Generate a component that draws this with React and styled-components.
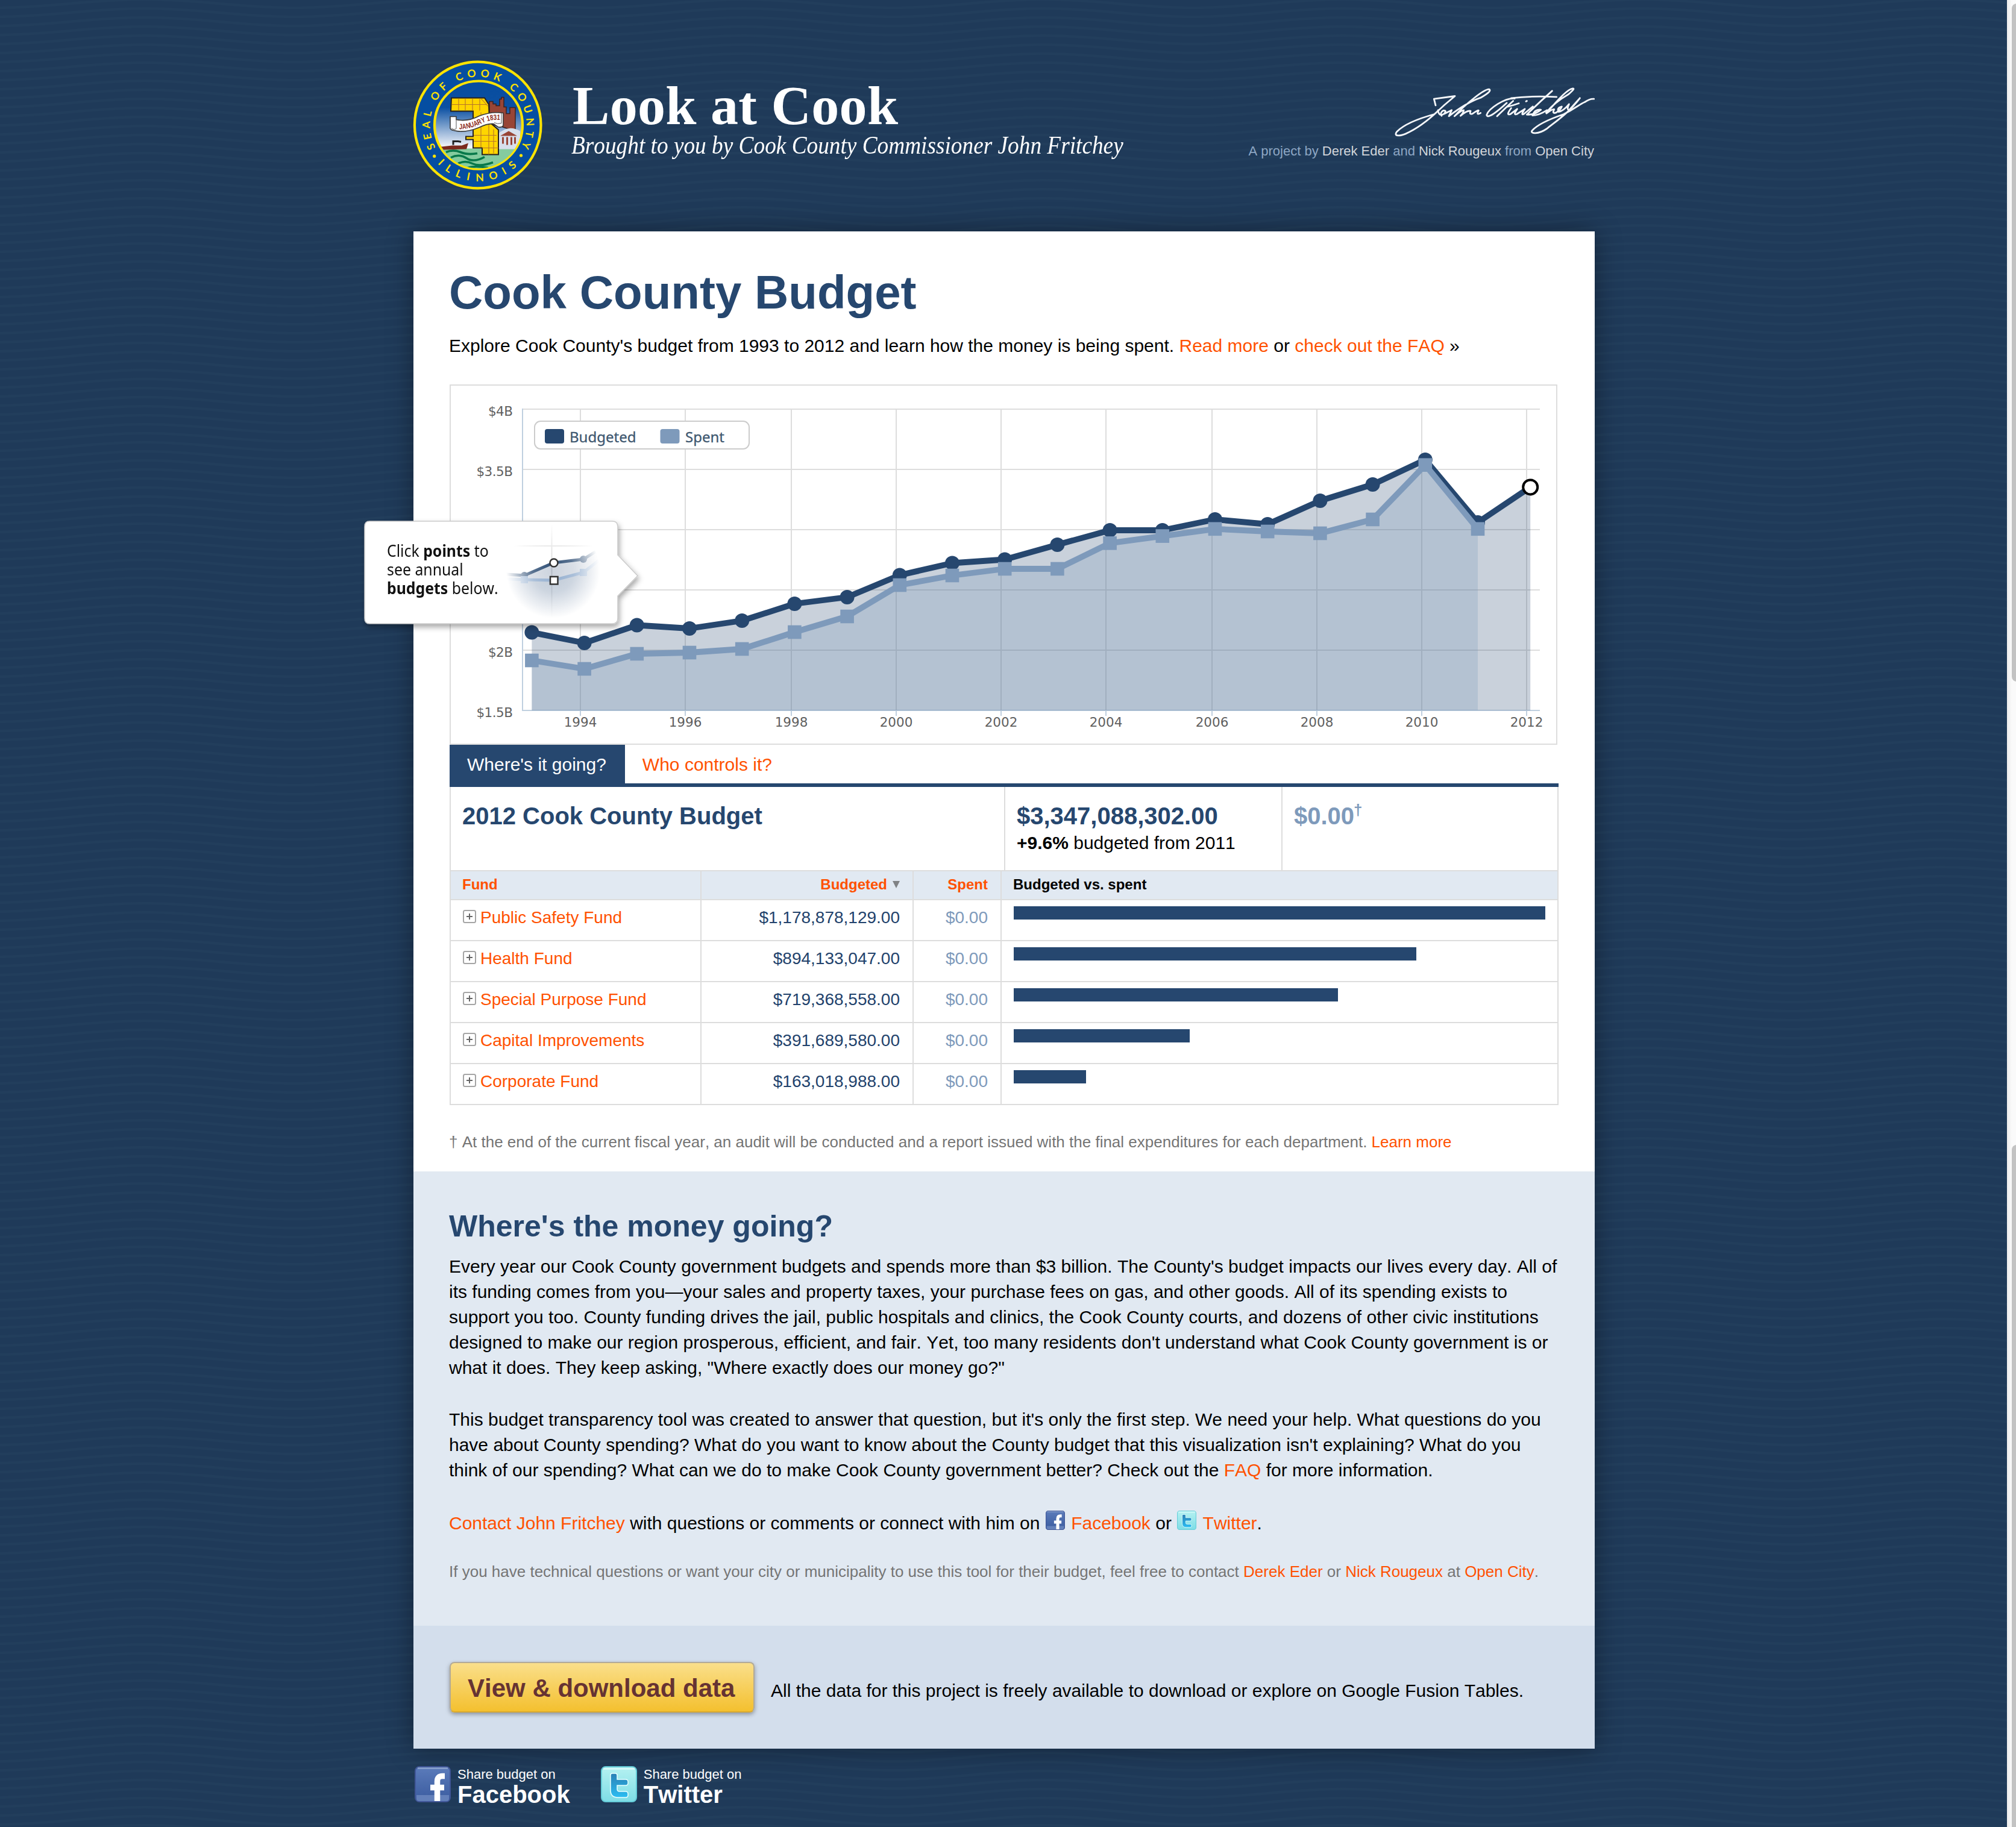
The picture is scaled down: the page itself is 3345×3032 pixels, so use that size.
import React from "react";
import styled, { createGlobalStyle, css } from "styled-components";

const navy = "#26476f";
const steel = "#7e9abb";
const orange = "#ff5100";
const line = "#dddddd";
const sans = '"Liberation Sans", Arial, Helvetica, sans-serif';
const serif = '"Liberation Serif", "Times New Roman", serif';

const wavePath = (y) => `M0 ${y + 7} C90 ${y + 7} 158 ${y - 7} 248 ${y - 7} S406 ${y + 7} 497 ${y + 7}`;
const waves = encodeURIComponent(
  `<svg xmlns='http://www.w3.org/2000/svg' width='497' height='15'><g fill='none' stroke='#26435f' stroke-width='4' stroke-opacity='.42'>${[-15, 0, 15, 30]
    .map((y) => `<path d='${wavePath(y)}'/>`)
    .join("")}</g></svg>`
);

const GlobalStyle = createGlobalStyle`
  html, body { margin: 0; padding: 0; background: #1f3a59; overflow: hidden; }
  * { box-sizing: border-box; }
`;

const Window = styled.div`
  display: flex;
  width: 3345px;
  height: 3032px;
  overflow: hidden;
  font-family: ${sans};
  font-kerning: none;
  color: #000;
`;

const Page = styled.div`
  flex: 0 0 3330px;
  display: flex;
  flex-direction: column;
  align-items: center;
  padding-left: 2px;
  background-color: #1f3a59;
  background-image: url("data:image/svg+xml,${waves}");
  background-position: -8px 6px;
`;

const ScrollTrack = styled.div`
  flex: 1;
  display: flex;
  flex-direction: column;
  justify-content: space-between;
  padding: 6px 0 0 8px;
  overflow: hidden;
  background: linear-gradient(90deg, #ececec, #fafafa 8px);
`;

const ScrollThumb = styled.div`
  width: 16px;
  height: ${(p) => p.$height}px;
  border-radius: 8px;
  background: #c3c3c3;
  ${(p) => p.$cut && css`border-bottom-left-radius: 0;`}
`;

const Header = styled.header`
  width: 1960px;
  height: 384px;
  display: flex;
  align-items: flex-start;
  flex: none;
`;

const SealArt = styled.svg`
  width: 216px;
  height: 216px;
  margin: 100px 1px 0 -1px;
  flex: none;
`;

const Branding = styled.div`
  flex: 1;
  margin: 130px 0 0 48px;
  color: #fff;
  font-family: ${serif};
  white-space: nowrap;
`;

const SiteName = styled.div`
  font-size: 92px;
  line-height: 90px;
  font-weight: bold;
  letter-spacing: 0.3px;
`;

const Tagline = styled.div`
  width: 0;
  margin-left: -2px;
  font-size: 42px;
  line-height: 42px;
  font-style: italic;
  transform: scaleX(0.888);
  transform-origin: 0 0;
`;

const Credits = styled.div`
  display: flex;
  flex-direction: column;
  align-items: flex-end;
  padding-top: 145px;
`;

const SignatureArt = styled.svg`
  width: 332px;
  height: 82px;
`;

const CreditLine = styled.div`
  margin-top: 11px;
  padding-right: 1px;
  font-size: 22px;
  line-height: 26px;
  color: #8ea7c4;
  white-space: nowrap;
  b { font-weight: normal; color: #d2d5da; }
`;

const Card = styled.main`
  width: 1960px;
  flex: none;
  background: #fff;
  box-shadow: 0 0 40px rgba(0, 0, 0, 0.38);
`;

const Section = styled.section`
  height: ${(p) => p.$height}px;
  padding: ${(p) => p.$top}px 60px 0;
  background: ${(p) => p.$bg};
`;

const PageTitle = styled.h1`
  margin: 0 0 0 -1px;
  font-size: 78px;
  line-height: 90px;
  color: ${navy};
`;

const Text = styled.p`
  margin: ${(p) => p.$gap || 0}px 0 0 -1px;
  font-size: 30px;
  line-height: 42px;
  white-space: nowrap;
`;

const SmallText = styled.p`
  margin: ${(p) => p.$gap}px 0 0 -1px;
  font-size: 26px;
  line-height: 36px;
  color: #757575;
  white-space: nowrap;
`;

const Link = styled.a`
  color: ${orange};
`;

const ChartFrame = styled.div`
  position: relative;
  width: 1838px;
  height: 598px;
  margin-top: 43px;
  border: 2px solid ${line};
`;

const ChartArt = styled.svg`
  display: block;
  width: 1834px;
  height: 594px;
`;

const Callout = styled.div`
  position: absolute;
  left: -158px;
  top: 210px;
  width: 490px;
  height: 204px;
`;

const CalloutArt = styled.svg`
  position: absolute;
  inset: 0;
  width: 490px;
  height: 204px;
`;

const CalloutText = styled.div`
  position: relative;
  padding: 48px 0 0 52px;
  font-family: "Noto Sans", "Open Sans", sans-serif;
  font-size: 27px;
  line-height: 31px;
  color: #111;
  white-space: nowrap;
  transform: scaleX(0.92);
  transform-origin: 52px 0;
`;

const Tabs = styled.nav`
  display: flex;
  height: 70px;
  border-bottom: 6px solid ${navy};
`;

const Tab = styled.div`
  padding: 2px 31px 0 29px;
  font-size: 30px;
  line-height: 62px;
  color: ${(p) => (p.$active ? "#fff" : orange)};
  background: ${(p) => (p.$active ? navy : "transparent")};
`;

const Table = styled.div`
  border: solid ${line};
  border-width: 0 2px;
`;

const Summary = styled.div`
  display: grid;
  grid-template-columns: 918px 460px 458px;
  height: 140px;
  border-bottom: 2px solid ${line};
`;

const SummaryCell = styled.div`
  padding: 24px 0 0 19px;
  & + & { border-left: 2px solid ${line}; }
`;

const Figure = styled.div`
  font-size: 40px;
  line-height: 48px;
  font-weight: bold;
  white-space: nowrap;
  color: ${(p) => (p.$muted ? steel : navy)};
`;

const Dagger = styled.span`
  display: inline-block;
  font-size: 26px;
  line-height: 24px;
  transform: translate(-1px, -15px);
`;

const Change = styled.div`
  margin-top: 3px;
  font-size: 30px;
  line-height: 36px;
  white-space: nowrap;
`;

const columns = css`
  display: grid;
  grid-template-columns: 414px 352px 146px 924px;
`;

const HeadRow = styled.div`
  ${columns}
  height: 48px;
  border-bottom: 2px solid ${line};
  background: #e1e9f2;
  font-size: 24px;
  line-height: 28px;
  font-weight: bold;
`;

const HeadCell = styled.div`
  padding: 8px 21px 0 19px;
  color: ${(p) => (p.$plain ? "#000" : orange)};
  text-align: ${(p) => (p.$right ? "right" : "left")};
  & + & { border-left: 2px solid ${line}; }
`;

const SortArrow = styled.span`
  display: inline-block;
  margin-left: 9px;
  border: solid transparent;
  border-width: 12px 6.5px 0;
  border-top-color: #808285;
  vertical-align: 2px;
`;

const FundRow = styled.div`
  ${columns}
  height: 68px;
  border-bottom: 2px solid ${line};
  font-size: 28px;
  line-height: 34px;
`;

const Cell = styled.div`
  padding: 12px 21px 0 20px;
  white-space: nowrap;
  & + & { border-left: 2px solid ${line}; }
`;

const NameCell = styled(Cell)`
  display: flex;
  gap: 7px;
  color: ${orange};
`;

const MoneyCell = styled(Cell)`
  text-align: right;
  color: ${(p) => (p.$muted ? steel : "#22426c")};
`;

const BarCell = styled(Cell)`
  padding-top: 10px;
`;

const Bar = styled.div`
  height: 22px;
  background: ${navy};
`;

const ExpandIcon = styled.svg`
  width: 22px;
  height: 22px;
  margin-top: 4px;
`;

const SectionTitle = styled.h2`
  margin: 0 0 0 -1px;
  font-size: 50px;
  line-height: 60px;
  color: ${navy};
`;

const DownloadRow = styled.div`
  display: flex;
  align-items: flex-start;
`;

const DownloadButton = styled.div`
  width: 506px;
  height: 84px;
  padding-left: 28px;
  border: 2px solid #b3aa96;
  border-bottom-color: #d9a92e;
  border-radius: 8px;
  background: linear-gradient(#fadf8b, #f4c02f);
  box-shadow: 0 3px 7px rgba(0, 0, 0, 0.35);
  color: #663333;
  font-size: 42px;
  line-height: 83px;
  font-weight: bold;
  white-space: nowrap;
`;

const DownloadNote = styled.div`
  margin: 27px 0 0 27px;
  font-size: 30px;
  line-height: 42px;
  white-space: nowrap;
`;

const ShareBar = styled.footer`
  display: flex;
  gap: 51px;
  width: 1960px;
  padding: 29px 0 0 2px;
`;

const Share = styled.div`
  display: flex;
  gap: 11px;
  color: #fff;
`;

const ShareLabel = styled.div`
  padding-top: 2px;
  font-size: 22px;
  line-height: 24px;
  white-space: nowrap;
`;

const ShareName = styled.div`
  padding-top: 1px;
  font-size: 40px;
  line-height: 40px;
  font-weight: bold;
`;

const Badge = styled.svg`
  width: ${(p) => p.$size}px;
  height: ${(p) => p.$size}px;
  ${(p) => p.$inline && css`margin: -8px 2px 0 1px; vertical-align: -1px;`}
`;

function Facebook({ size, inline }) {
  return (
    <Badge $size={size} $inline={inline} viewBox="0 0 60 60">
      <defs>
        <linearGradient id="fb" x2="0" y2="1">
          <stop offset="0" stopColor="#5b7bba" />
          <stop offset="1" stopColor="#3a5b9f" />
        </linearGradient>
      </defs>
      <rect x="1" y="1" width="58" height="58" rx="7" fill="url(#fb)" stroke="#3f5596" strokeWidth="2" />
      <path d="M5 3.5H55" stroke="#8ba3cf" strokeWidth="2.5" />
      <path d="M3 48h54v6q0 4-4 4H7q-4 0-4-4z" fill="#6380ba" />
      <path d="M50 16.5h-4q-8.500 0-8.500 9V58M26 35.500H49" fill="none" stroke="#fff" strokeWidth="9.500" />
    </Badge>
  );
}

function Twitter({ size, inline }) {
  return (
    <Badge $size={size} $inline={inline} viewBox="0 0 60 60">
      <defs>
        <linearGradient id="tw" x2="0" y2="1">
          <stop offset="0" stopColor="#b5f1f1" />
          <stop offset="1" stopColor="#7edde6" />
        </linearGradient>
        <linearGradient id="twt" x2="0" y2="1">
          <stop offset="0" stopColor="#2a80b5" />
          <stop offset="1" stopColor="#2bbdf2" />
        </linearGradient>
      </defs>
      <rect x="1" y="1" width="58" height="58" rx="7" fill="url(#tw)" stroke="#66cdd9" strokeWidth="2" />
      <path d="M4 4.500H56" stroke="#d9fbfa" strokeWidth="2.500" />
      <path
        d="M16 15q0-3 3-3h5q3 0 3 3v7h14q4 0 4 4v2q0 4-4 4H27v6q0 4 4 4h10q4 0 4 4v2q0 4-4 4H28q-12 0-12-12z"
        fill="url(#twt)"
        stroke="#e6ffff"
        strokeWidth="1.500"
      />
    </Badge>
  );
}

function Seal() {
  return (
    <SealArt viewBox="15 9.5 216 216">
      <defs>
        <linearGradient id="sky" x2="0" y2="1">
          <stop offset="0" stopColor="#074c9f" />
          <stop offset=".3" stopColor="#0b50a2" />
          <stop offset=".75" stopColor="#f3f6fb" />
        </linearGradient>
        <clipPath id="inner"><circle cx="124" cy="117" r="72" /></clipPath>
        <path id="arcTop" d="M52.900 154.600A80 80 0 1 1 194.100 154.600" />
        <path id="arcBottom" d="M56 181A93 93 0 0 0 190.500 182" />
      </defs>
      <circle cx="122.700" cy="117" r="104.800" fill="#054ea2" stroke="#ffe300" strokeWidth="4.200" />
      <circle cx="124" cy="117" r="73" fill="url(#sky)" stroke="#ffe300" strokeWidth="4.200" />
      <g clipPath="url(#inner)">
        <path d="M50 156H200V195H50z" fill="#85cb9f" />
        <path
          d="M70 162q12-5 24 0t28 2M78 171q14-7 26 1t30-2M90 181q12-6 24 0t34-2M106 188q12-4 34 0"
          stroke="#08784a" strokeWidth="3.600" fill="none"
        />
        <path d="M62 153l18-2 16 0 11-4-3 10-38 1z" fill="#7b2a1e" />
        <path d="M82 150v-6h8l5 1" stroke="#222" strokeWidth="3" fill="none" />
        <path d="M142 104V78h6v4h5v3h6V74h3v-3h4v16h4v11h6V88h9v40q-22-10-43-12z" fill="#984536" stroke="#3b2220" strokeWidth="1.500" />
        <path d="M155 133q18-18 38-6v30h-36z" fill="#d7dfec" />
        <path d="M160 135l14-8 14 8zM163 137h3v11h-3zM170 137h3v13h-3zM177 137h3v13h-3zM183 137h3v11h-3z" fill="#984536" />
      </g>
      <path
        d="M79 72h55l7 11 1 29 15 13v41h-27v-11h-15v-14h-12v-5h12V94H78z"
        fill="#ffd500" stroke="#27221f" strokeWidth="2"
      />
      <path
        d="M80 83h58M91 73v20M102 73v20M114 73v20M126 73v20M128 73l12 13M116 105h26M128 96v58M141 112v54M116 134h38M116 144h38M130 155h27M149 124v40"
        stroke="#b5742a" strokeWidth="1.100" fill="none"
      />
      <path
        d="M77 103h10v5q19 4 38-6 20-8 40-5v21q-3 4-9 2l-7-5q-10-1-24 6-24 10-42 5-7-1-6-6z"
        fill="#fff" stroke="#3a3a3a" strokeWidth="1.600"
      />
      <path d="M87 106v17q-4 3-8-1M162 97v17q-7 2-12-1" stroke="#555" strokeWidth="1" fill="none" />
      <path id="ribbon" d="M92 124Q110 124 128 115T162 109" fill="none" />
      <text fontFamily="Liberation Sans, sans-serif" fontWeight="bold" fontSize="12.500" fill="#8d2c20">
        <textPath href="#ribbon" textLength="70" lengthAdjust="spacingAndGlyphs">JANUARY 1831</textPath>
      </text>
      <g fontFamily="Lato, Open Sans, sans-serif" fontWeight="bold" fontSize="17.500" fill="#ffe300">
        <text><textPath href="#arcTop" textLength="328">SEAL OF COOK COUNTY</textPath></text>
        <text><textPath href="#arcBottom" textLength="146">ILLINOIS</textPath></text>
      </g>
      <circle cx="50.700" cy="168.700" r="2.600" fill="#ffe300" />
      <circle cx="194.500" cy="167.500" r="2.600" fill="#ffe300" />
    </SealArt>
  );
}

function Signature() {
  return (
    <SignatureArt viewBox="42 45 996 245" fill="none" stroke="#f4f6f9" strokeWidth="8.500" strokeLinecap="round" strokeLinejoin="round">
      <path d="M246 134L238 102L342 88Q290 130 240 178C160 200 90 228 54 264C36 286 60 290 96 276C160 248 210 208 262 158" />
      <path d="M258 158Q262 192 288 176Q304 158 284 160Q266 170 276 186M290 176L326 158L312 188Q400 120 470 96Q530 62 512 54C490 52 400 122 340 188Q370 160 386 158Q384 172 370 186Q402 158 420 162Q412 184 432 174Q458 156 460 160Q446 186 470 172" />
      <path d="M640 100C590 96 510 150 500 182C504 204 560 160 600 122M632 112Q590 150 552 188M600 142Q632 134 660 124M622 98Q720 86 848 92" />
      <path d="M622 148Q594 186 618 178L652 152Q630 184 650 178L690 152Q668 184 684 178L730 140M826 62Q760 120 700 180Q740 182 770 156Q740 152 728 184Q760 184 800 158M696 114L700 112" />
      <path d="M796 170Q840 118 906 80Q944 48 928 50C900 54 850 110 798 174Q830 150 836 154Q824 178 846 170Q870 154 874 140Q848 146 858 166Q880 164 910 128Q896 158 912 156L964 98M964 98C910 170 850 210 800 250C756 280 716 276 726 260C752 230 820 200 884 178C940 150 960 130 988 118Q1014 100 1034 102" />
    </SignatureArt>
  );
}

const budgeted = [1049.6, 1067, 1037.5, 1043, 1030, 1002, 991, 954.5, 934.5, 928.5, 904, 880, 880, 862, 870, 831, 804, 763, 867, 808.4];
const spent = [1096, 1110, 1085, 1083, 1077, 1049, 1023, 971, 955, 944, 944, 901.4, 889.6, 877.8, 882, 885, 862, 771.7, 877.8];
const px = (i) => 882.4 + i * 87.2;
const toLine = (ys) => ys.map((y, i) => `${i ? "L" : "M"}${px(i)} ${y}`).join("");
const toArea = (ys) => `${toLine(ys)}V1179H${px(0)}Z`;
const gridX = [963, 1137, 1313, 1487, 1661, 1835, 2011, 2185, 2359, 2533];
const gridY = [679, 779, 879, 979, 1079];
const yLabels = [["$4B", 690], ["$3.5B", 790], ["$3B", 890], ["$2.5B", 990], ["$2B", 1090], ["$1.5B", 1190]];

function Chart() {
  return (
    <ChartArt viewBox="748 640 1834 594">
      <g stroke={line} strokeWidth="2">
        {gridX.map((x) => <path key={x} d={`M${x} 679V1179`} />)}
        {gridY.map((y) => <path key={y} d={`M867 ${y}H2555`} />)}
      </g>
      <g stroke="#c0d0e0" strokeWidth="2" fill="none">
        <path d="M867 678V1179H2555" />
        {gridX.map((x) => <path key={x} d={`M${x} 1179V1188`} />)}
      </g>
      <path d={toArea(budgeted)} fill="rgba(38,71,111,.25)" />
      <path d={toLine(budgeted)} fill="none" stroke={navy} strokeWidth="9.800" strokeLinejoin="round" />
      {budgeted.slice(0, 19).map((y, i) => <circle key={i} cx={px(i)} cy={y} r="12" fill={navy} />)}
      <path d={toArea(spent)} fill="rgba(126,154,187,.27)" />
      <path d={toLine(spent)} fill="none" stroke={steel} strokeWidth="9.800" strokeLinejoin="round" />
      {spent.map((y, i) => <rect key={i} x={px(i) - 11.3} y={y - 11.3} width="22.600" height="22.600" fill={steel} />)}
      <circle cx={px(19)} cy={budgeted[19]} r="12" fill="#fff" stroke="#000" strokeWidth="4" />
      <rect x="887" y="699" width="356" height="46" rx="10" fill="#fff" stroke="#ccc" strokeWidth="2" />
      <rect x="904" y="712" width="32" height="24" rx="4" fill={navy} />
      <rect x="1095.500" y="712" width="32" height="24" rx="4" fill={steel} />
      <g fontFamily="Noto Sans, sans-serif" fontSize="24" fill="#3e576f" stroke="#3e576f" strokeWidth=".3">
        <text x="945" y="734">Budgeted</text>
        <text x="1137" y="734">Spent</text>
      </g>
      <g fontFamily="DejaVu Sans, sans-serif" fontSize="21.500" fill="#606060">
        {yLabels.map(([t, y]) => <text key={t} x="850.500" y={y} textAnchor="end" letterSpacing="-.5">{t}</text>)}
        {gridX.map((x, i) => <text key={x} x={x} y="1206" textAnchor="middle">{1994 + i * 2}</text>)}
      </g>
    </ChartArt>
  );
}

function PointsHint() {
  return (
    <Callout>
      <CalloutArt viewBox="590 850 490 204">
        <defs>
          <filter id="drop" x="-10%" y="-10%" width="120%" height="130%">
            <feDropShadow dx="2" dy="5" stdDeviation="5" floodColor="#000" floodOpacity=".35" />
          </filter>
          <radialGradient id="fade" gradientUnits="userSpaceOnUse" cx="918" cy="948" r="78">
            <stop offset="0" stopColor="#fff" />
            <stop offset=".45" stopColor="#fff" stopOpacity=".75" />
            <stop offset="1" stopColor="#fff" stopOpacity="0" />
          </radialGradient>
          <mask id="spot"><rect x="820" y="865" width="190" height="170" fill="url(#fade)" /></mask>
        </defs>
        <path
          d="M613 865H1016Q1025 865 1025 874V921L1058 955.500L1025 989V1026Q1025 1035 1016 1035H613Q605 1035 605 1026V874Q605 865 613 865Z"
          fill="#fff" stroke="#cbcbcb" strokeWidth="1.600" filter="url(#drop)"
        />
        <g mask="url(#spot)">
          <path d="M915.500 870V1030M840 906H1000" stroke="#ddd" strokeWidth="2" />
          <path d="M840 953L870 955L918.600 934L968 928L1000 908V1030H840Z" fill="#26476f" fillOpacity=".23" />
          <path d="M840 962H870L918.600 963L968 950L1000 925V1030H840Z" fill="#7e9abb" fillOpacity=".2" />
          <path d="M840 953L870 955L918.600 934L968 928L1000 908" stroke={navy} strokeWidth="5" fill="none" />
          <path d="M840 961L870 962L918.600 963L968 950L1000 925" stroke="#8fabcd" strokeWidth="5" fill="none" />
          <circle cx="870" cy="955" r="6" fill={navy} /><circle cx="968" cy="928" r="6" fill={navy} />
          <path d="M864 956h12v12h-12zM962 944h12v12h-12z" fill="#8fabcd" />
        </g>
        <circle cx="919" cy="934" r="6.500" fill="#fff" stroke="#333" strokeWidth="2.500" />
        <rect x="913" y="957" width="12.500" height="12.500" fill="#fff" stroke="#333" strokeWidth="2.500" />
      </CalloutArt>
      <CalloutText>
        Click <b>points</b> to<br />see annual<br /><b>budgets</b> below.
      </CalloutText>
    </Callout>
  );
}

const funds = [
  ["Public Safety Fund", "$1,178,878,129.00", 882],
  ["Health Fund", "$894,133,047.00", 668],
  ["Special Purpose Fund", "$719,368,558.00", 538],
  ["Capital Improvements", "$391,689,580.00", 292],
  ["Corporate Fund", "$163,018,988.00", 120],
];

function Expand() {
  return (
    <ExpandIcon viewBox="0 0 22 22">
      <rect x="1" y="1" width="20" height="20" rx="2.500" fill="#fff" stroke="#a5a5a5" strokeWidth="2" />
      <path d="M11 6v10M6 11h10" stroke="#666" strokeWidth="2" />
    </ExpandIcon>
  );
}

export default function App() {
  return (
    <Window>
      <GlobalStyle />
      <Page>
        <Header>
          <Seal />
          <Branding>
            <SiteName>Look at Cook</SiteName>
            <Tagline>Brought to you by Cook County Commissioner John Fritchey</Tagline>
          </Branding>
          <Credits>
            <Signature />
            <CreditLine>
              A project by <b>Derek Eder</b> and <b>Nick Rougeux</b> from <b>Open City</b>
            </CreditLine>
          </Credits>
        </Header>

        <Card>
          <Section $height={1560} $top={56} $bg="#fff">
            <PageTitle>Cook County Budget</PageTitle>
            <Text $gap={23}>
              Explore Cook County's budget from 1993 to 2012 and learn how the money is being spent.{" "}
              <Link>Read more</Link> or <Link>check out the FAQ</Link> »
            </Text>
            <ChartFrame>
              <Chart />
              <PointsHint />
            </ChartFrame>
            <Tabs>
              <Tab $active>Where's it going?</Tab>
              <Tab>Who controls it?</Tab>
            </Tabs>
            <Table>
              <Summary>
                <SummaryCell><Figure>2012 Cook County Budget</Figure></SummaryCell>
                <SummaryCell>
                  <Figure>$3,347,088,302.00</Figure>
                  <Change><b>+9.6%</b> budgeted from 2011</Change>
                </SummaryCell>
                <SummaryCell><Figure $muted>$0.00<Dagger>†</Dagger></Figure></SummaryCell>
              </Summary>
              <HeadRow>
                <HeadCell>Fund</HeadCell>
                <HeadCell $right>Budgeted<SortArrow /></HeadCell>
                <HeadCell $right>Spent</HeadCell>
                <HeadCell $plain>Budgeted vs. spent</HeadCell>
              </HeadRow>
              {funds.map(([name, amount, width]) => (
                <FundRow key={name}>
                  <NameCell><Expand />{name}</NameCell>
                  <MoneyCell>{amount}</MoneyCell>
                  <MoneyCell $muted>$0.00</MoneyCell>
                  <BarCell><Bar style={{ width }} /></BarCell>
                </FundRow>
              ))}
            </Table>
            <SmallText $gap={43}>
              † At the end of the current fiscal year, an audit will be conducted and a report issued with the final
              expenditures for each department. <Link>Learn more</Link>
            </SmallText>
          </Section>

          <Section $height={754} $top={61} $bg="#e1e9f2">
            <SectionTitle>Where's the money going?</SectionTitle>
            <Text $gap={16}>
              Every year our Cook County government budgets and spends more than $3 billion. The County's budget impacts our lives every day. All of<br />
              its funding comes from you—your sales and property taxes, your purchase fees on gas, and other goods. All of its spending exists to<br />
              support you too. County funding drives the jail, public hospitals and clinics, the Cook County courts, and dozens of other civic institutions<br />
              designed to make our region prosperous, efficient, and fair. Yet, too many residents don't understand what Cook County government is or<br />
              what it does. They keep asking, "Where exactly does our money go?"
            </Text>
            <Text $gap={44}>
              This budget transparency tool was created to answer that question, but it's only the first step. We need your help. What questions do you<br />
              have about County spending? What do you want to know about the County budget that this visualization isn't explaining? What do you<br />
              think of our spending? What can we do to make Cook County government better? Check out the <Link>FAQ</Link> for more information.
            </Text>
            <Text $gap={46}>
              <Link>Contact John Fritchey</Link> with questions or comments or connect with him on{" "}
              <Facebook size={32} inline /> <Link>Facebook</Link> or <Twitter size={32} inline /> <Link>Twitter</Link>.
            </Text>
            <SmallText $gap={41}>
              If you have technical questions or want your city or municipality to use this tool for their budget, feel free to contact{" "}
              <Link>Derek Eder</Link> or <Link>Nick Rougeux</Link> at <Link>Open City</Link>.
            </SmallText>
          </Section>

          <Section $height={204} $top={60} $bg="#d3deec">
            <DownloadRow>
              <DownloadButton>View &amp; download data</DownloadButton>
              <DownloadNote>
                All the data for this project is freely available to download or explore on Google Fusion Tables.
              </DownloadNote>
            </DownloadRow>
          </Section>
        </Card>

        <ShareBar>
          <Share>
            <Facebook size={60} />
            <div>
              <ShareLabel>Share budget on</ShareLabel>
              <ShareName>Facebook</ShareName>
            </div>
          </Share>
          <Share>
            <Twitter size={60} />
            <div>
              <ShareLabel>Share budget on</ShareLabel>
              <ShareName>Twitter</ShareName>
            </div>
          </Share>
        </ShareBar>
      </Page>
      <ScrollTrack>
        <ScrollThumb $height={1125} />
        <ScrollThumb $height={1132} $cut />
      </ScrollTrack>
    </Window>
  );
}
